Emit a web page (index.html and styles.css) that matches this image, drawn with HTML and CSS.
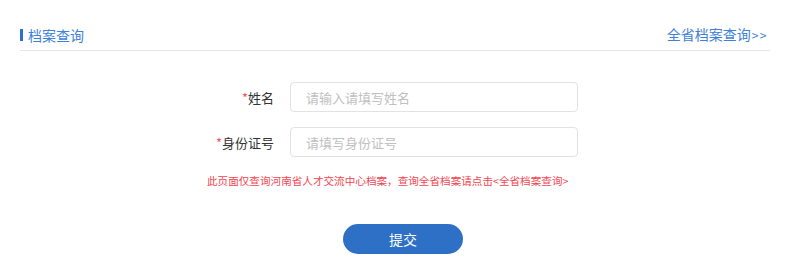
FILE: index.html
```html
<!DOCTYPE html>
<html lang="zh-CN">
<head>
<meta charset="utf-8">
<title>档案查询</title>
<link rel="stylesheet" href="styles.css">
</head>
<body>
<div class="page">
  <div class="head">
    <div class="title"><span class="bar"></span>档案查询</div>
    <a class="all-link" href="#">全省档案查询<span class="arrows">&gt;&gt;</span></a>
  </div>
  <form class="form">
    <div class="row">
      <label class="label"><span class="star">*</span>姓名</label>
      <input class="input" type="text" placeholder="请输入请填写姓名">
    </div>
    <div class="row">
      <label class="label"><span class="star">*</span>身份证号</label>
      <input class="input" type="text" placeholder="请填写身份证号">
    </div>
    <p class="note">此页面仅查询河南省人才交流中心档案，查询全省档案请点击&lt;全省档案查询&gt;</p>
    <div class="actions">
      <button class="submit" type="button">提交</button>
    </div>
  </form>
</div>
</body>
</html>
```

FILE: styles.css
```css
* { box-sizing: border-box; }
html, body { margin: 0; padding: 0; background: #fff; }
body {
  font-family: "Noto Sans CJK SC", "Noto Sans", "Liberation Sans", sans-serif;
  color: #333;
}
.page { padding: 20px 30px 0 20px; }
.head {
  display: flex;
  justify-content: space-between;
  align-items: center;
  height: 31px;
  border-bottom: 1px solid #e6e6e6;
  padding-bottom: 1px;
}
.title {
  display: flex;
  align-items: center;
  font-size: 14px;
  color: #3d7fd9;
  line-height: 20px;
}
.bar {
  display: inline-block;
  width: 3px;
  height: 12px;
  background: #2b6fcf;
  margin-right: 5px;
}
.all-link {
  font-size: 14px;
  color: #3d7fd9;
  text-decoration: none;
  line-height: 20px;
  margin-right: 2px;
}
.arrows {
  font-size: 12px;
  letter-spacing: 1.5px;
  margin-left: 1px;
}
.form { padding-top: 31px; }
.row {
  display: flex;
  align-items: center;
  margin-bottom: 15px;
}
.label {
  width: 254px;
  text-align: right;
  font-size: 13px;
  color: #333;
  margin-right: 16px;
}
.star { color: #f2555f; }
.input {
  width: 288px;
  height: 30px;
  border: 1px solid #e2e2e2;
  border-radius: 4px;
  padding: 0 15px;
  font-size: 13px;
  font-family: inherit;
  color: #333;
  outline: none;
}
.input::placeholder { color: #c0c0c0; }
.note {
  margin: 16px 0 0 187px;
  font-size: 10.6px;
  line-height: 16px;
  color: #f2454f;
}
.actions {
  padding: 35px 0 0 323px;
}
.submit {
  width: 120px;
  height: 30px;
  border: none;
  border-radius: 15px;
  background: #2e70c6;
  color: #fff;
  font-size: 14px;
  font-family: inherit;
  cursor: pointer;
}
```
